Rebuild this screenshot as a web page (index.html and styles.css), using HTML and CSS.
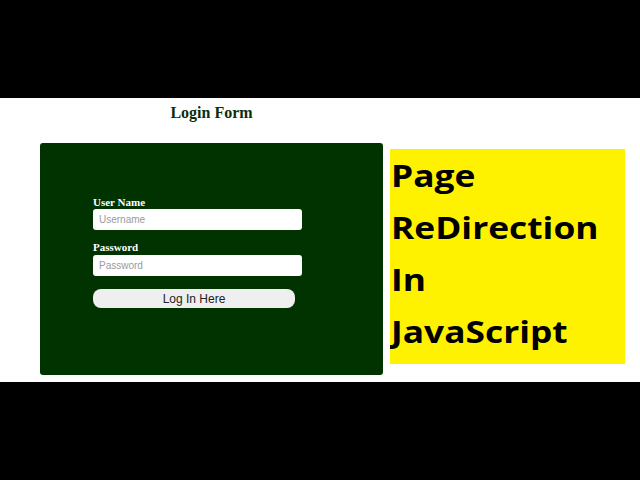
FILE: index.html
```html
<!DOCTYPE html>
<html>
<head>
<meta charset="utf-8">
<link rel="stylesheet" href="styles.css">
</head>
<body>
<div class="bar"></div>
<main class="band">
  <section class="left">
    <h1 class="title">Login Form</h1>
    <form class="panel">
      <label class="label" for="u">User Name</label>
      <input class="field" id="u" type="text" placeholder="Username">
      <label class="label label-second" for="p">Password</label>
      <input class="field field-second" id="p" type="password" placeholder="Password">
      <button class="btn" type="button">Log In Here</button>
    </form>
  </section>
  <aside class="note">
    <div class="note-text">Page<br>ReDirection<br>In<br>JavaScript</div>
  </aside>
</main>
<div class="bar"></div>
</body>
</html>
```
FILE: styles.css
```css
html, body {
  margin: 0;
  padding: 0;
  background: #000;
}
.bar {
  height: 98px;
  background: #000;
}
.band {
  height: 284px;
  background: #fff;
  display: flex;
  align-items: flex-start;
  padding-left: 40px;
  gap: 7px;
  box-sizing: border-box;
}
.left {
  width: 343px;
  display: flex;
  flex-direction: column;
  padding-top: 6px;
}
.title {
  margin: 0;
  font-family: "Liberation Serif", serif;
  font-weight: bold;
  font-size: 16px;
  line-height: 18px;
  color: #0b2e0b;
  text-align: center;
}
.panel {
  margin: 21px 0 0 0;
  height: 232px;
  background: #003300;
  border-radius: 3px;
  box-sizing: border-box;
  padding: 53px 0 0 53px;
  display: flex;
  flex-direction: column;
  align-items: flex-start;
}
.label {
  font-family: "Liberation Serif", serif;
  font-weight: bold;
  font-size: 11px;
  line-height: 13px;
  color: #fff;
}
.label-second {
  margin-top: 11px;
}
.field {
  margin-top: 0;
  width: 209px;
  height: 21px;
  box-sizing: border-box;
  border: none;
  border-radius: 3px;
  background: #fff;
  padding: 0 6px;
  font-family: "Liberation Sans", sans-serif;
  font-size: 10px;
  color: #333;
  outline: none;
}
.field-second {
  margin-top: 1px;
}
.field::placeholder {
  color: #9a9a9a;
}
.btn {
  margin-top: 13px;
  width: 202px;
  height: 19px;
  border: none;
  border-radius: 8px;
  background: #efefef;
  font-family: "Liberation Sans", sans-serif;
  font-size: 12px;
  color: #222;
  padding: 0;
}
.note {
  margin-top: 51px;
  width: 235px;
  height: 215px;
  background: #fff200;
  box-sizing: border-box;
  padding: 0 0 0 1px;
  overflow: hidden;
}
.note-text {
  font-family: "Open Sans", sans-serif;
  font-weight: bold;
  font-size: 31px;
  line-height: 52px;
  color: #000;
  transform: scaleX(1.14);
  transform-origin: left top;
  white-space: nowrap;
}
```
